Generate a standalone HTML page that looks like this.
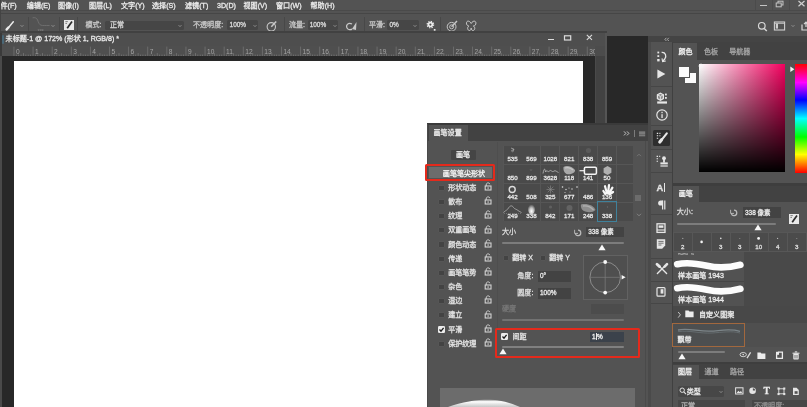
<!DOCTYPE html>
<html lang="zh"><head><meta charset="utf-8"><title>Photoshop</title>
<style>
html,body{margin:0;padding:0;}
body{width:807px;height:407px;overflow:hidden;background:#535353;position:relative;font-family:"Liberation Sans","Noto Sans CJK SC",sans-serif;}
#app{position:absolute;left:0;top:0;width:807px;height:407px;overflow:hidden;filter:blur(0.35px);will-change:transform;}
#app>div,#app>svg{position:absolute;display:block;}
.t{white-space:nowrap;-webkit-text-stroke:0.28px currentColor;}
</style></head><body>
<div id="app">
<div style="left:0px;top:0px;width:807px;height:14px;background:#535353;"></div>
<div class="t" style="left:0.5px;top:-0.1px;height:12px;line-height:12px;font-size:7.1px;color:#ececec;">件(F)</div>
<div class="t" style="left:26.8px;top:-0.1px;height:12px;line-height:12px;font-size:7.1px;color:#ececec;">编辑(E)</div>
<div class="t" style="left:58px;top:-0.1px;height:12px;line-height:12px;font-size:7.1px;color:#ececec;">图像(I)</div>
<div class="t" style="left:89px;top:-0.1px;height:12px;line-height:12px;font-size:7.1px;color:#ececec;">图层(L)</div>
<div class="t" style="left:121px;top:-0.1px;height:12px;line-height:12px;font-size:7.1px;color:#ececec;">文字(Y)</div>
<div class="t" style="left:152px;top:-0.1px;height:12px;line-height:12px;font-size:7.1px;color:#ececec;">选择(S)</div>
<div class="t" style="left:185px;top:-0.1px;height:12px;line-height:12px;font-size:7.1px;color:#ececec;">滤镜(T)</div>
<div class="t" style="left:217px;top:-0.1px;height:12px;line-height:12px;font-size:7.1px;color:#ececec;">3D(D)</div>
<div class="t" style="left:243.5px;top:-0.1px;height:12px;line-height:12px;font-size:7.1px;color:#ececec;">视图(V)</div>
<div class="t" style="left:276px;top:-0.1px;height:12px;line-height:12px;font-size:7.1px;color:#ececec;">窗口(W)</div>
<div class="t" style="left:310.5px;top:-0.1px;height:12px;line-height:12px;font-size:7.1px;color:#ececec;">帮助(H)</div>
<div style="left:755px;top:0px;width:1px;height:10px;background:#4b4b4b;"></div>
<div style="left:772px;top:0px;width:1px;height:10px;background:#4b4b4b;"></div>
<div style="left:789px;top:0px;width:1px;height:10px;background:#4b4b4b;"></div>
<div style="left:760px;top:4.6px;width:6.5px;height:1.4px;background:#c4c4c4;"></div>
<svg style="left:774px;top:0px;" width="11" height="9" viewBox="0 0 11 9"><rect x="4" y="1.2" width="5" height="3.8" fill="none" stroke="#c4c4c4" stroke-width="1"/><rect x="2.2" y="3" width="5" height="3.8" fill="#535353" stroke="#c4c4c4" stroke-width="1"/></svg>
<svg style="left:797px;top:0px;" width="9" height="8" viewBox="0 0 9 8"><path d="M1.5 1 L7.5 6.2 M7.5 1 L1.5 6.2" stroke="#d0d0d0" stroke-width="1.2"/></svg>
<div style="left:0px;top:9.6px;width:807px;height:1px;background:#4a4a4a;"></div>
<div style="left:0px;top:13.4px;width:807px;height:1px;background:#464646;"></div>
<div style="left:0px;top:14.4px;width:807px;height:21.6px;background:#535353;"></div>
<div style="left:0px;top:0px;width:1.2px;height:32px;background:#444444;"></div>
<svg style="left:4px;top:19.9px;" width="12" height="12" viewBox="0 0 12 12"><path d="M9.3 1.8 L5 7" stroke="#ececec" stroke-width="1.5" stroke-linecap="round"/><path d="M4.4 7.4 L2.6 9.6" stroke="#ececec" stroke-width="2.4" stroke-linecap="round"/></svg>
<svg style="left:17.5px;top:22.2px;" width="8" height="8" viewBox="0 0 8 8"><path d="M2.6 3.2 L4 4.6 L5.4 3.2" fill="none" stroke="#999999" stroke-width="0.9"/></svg>
<div style="left:27.5px;top:17px;width:1px;height:15px;background:#484848;"></div>
<svg style="left:30px;top:15.9px;" width="26" height="18" viewBox="0 0 26 18"><path d="M2.6 1.8 C5 1.4 6.6 1.8 7.6 4 C8.6 6.4 9 8.6 11 9.2 C13 9.8 15 9.4 19.6 9.5" fill="none" stroke="#707070" stroke-width="0.9"/><text x="7.4" y="15.6" font-size="3.6" fill="#8c8c8c" font-family="Liberation Sans, sans-serif">338</text></svg>
<svg style="left:48.8px;top:22.2px;" width="8" height="8" viewBox="0 0 8 8"><path d="M2.6 3.2 L4 4.6 L5.4 3.2" fill="none" stroke="#999999" stroke-width="0.9"/></svg>
<div style="left:58.5px;top:17px;width:1px;height:15px;background:#484848;"></div>
<svg style="left:63.6px;top:20.4px;" width="10" height="10" viewBox="0 0 10 10"><rect x="0" y="0" width="10" height="10" fill="#e8e8e8"/><path d="M8 1.6 L3.2 8.2" stroke="#2a2a2a" stroke-width="1.7"/><path d="M1.4 1.6 h2.4 M1.4 3.4 h1.6" stroke="#666" stroke-width="0.8"/></svg>
<div style="left:77.3px;top:17px;width:1px;height:15px;background:#484848;"></div>
<div class="t" style="left:85.5px;top:18.9px;height:12px;line-height:12px;font-size:7.05px;color:#c6c6c6;">模式:</div>
<div style="left:104.6px;top:20.5px;width:79px;height:9.1px;background:#464646;border-radius:1.5px;"></div>
<div class="t" style="left:110px;top:18.9px;height:12px;line-height:12px;font-size:7.05px;color:#d4d4d4;">正常</div>
<svg style="left:176px;top:22.2px;" width="8" height="8" viewBox="0 0 8 8"><path d="M2.6 3.2 L4 4.6 L5.4 3.2" fill="none" stroke="#999999" stroke-width="0.9"/></svg>
<div class="t" style="left:193px;top:18.9px;height:12px;line-height:12px;font-size:7.05px;color:#c6c6c6;">不透明度:</div>
<div style="left:227.4px;top:20.4px;width:31px;height:9.2px;background:#464646;border-radius:1.5px;"></div>
<div class="t" style="left:229.6px;top:18.9px;height:12px;line-height:12px;font-size:6.45px;color:#dcdcdc;">100%</div>
<svg style="left:251px;top:22.2px;" width="8" height="8" viewBox="0 0 8 8"><path d="M2.6 3.2 L4 4.6 L5.4 3.2" fill="none" stroke="#999999" stroke-width="0.9"/></svg>
<svg style="left:265px;top:18.9px;" width="14" height="14" viewBox="0 0 14 14"><circle cx="6.3" cy="7.8" r="4.2" fill="none" stroke="#c8c8c8" stroke-width="1.1"/><path d="M6.3 7.8 L11.2 2.4" stroke="#c8c8c8" stroke-width="1.5"/></svg>
<div style="left:283.5px;top:17px;width:1px;height:15px;background:#484848;"></div>
<div class="t" style="left:289px;top:18.9px;height:12px;line-height:12px;font-size:7.05px;color:#c6c6c6;">流量:</div>
<div style="left:308px;top:20.4px;width:29.6px;height:9.2px;background:#464646;border-radius:1.5px;"></div>
<div class="t" style="left:309.7px;top:18.9px;height:12px;line-height:12px;font-size:6.45px;color:#dcdcdc;">100%</div>
<svg style="left:330.6px;top:22.2px;" width="8" height="8" viewBox="0 0 8 8"><path d="M2.6 3.2 L4 4.6 L5.4 3.2" fill="none" stroke="#999999" stroke-width="0.9"/></svg>
<svg style="left:344px;top:18.9px;" width="16" height="14" viewBox="0 0 16 14"><path d="M8 5 C4.5 3 1.5 6 3 9 C4 11 7 11 8 10" fill="none" stroke="#c8c8c8" stroke-width="1.2"/><path d="M8 10 L12.5 3 L12 11 Z" fill="#c8c8c8"/></svg>
<div style="left:363.5px;top:17px;width:1px;height:15px;background:#484848;"></div>
<div class="t" style="left:369px;top:18.9px;height:12px;line-height:12px;font-size:7.05px;color:#c6c6c6;">平滑:</div>
<div style="left:387.4px;top:20.4px;width:31.4px;height:9.2px;background:#464646;border-radius:1.5px;"></div>
<div class="t" style="left:389.4px;top:18.9px;height:12px;line-height:12px;font-size:6.45px;color:#dcdcdc;">0%</div>
<svg style="left:411px;top:22.2px;" width="8" height="8" viewBox="0 0 8 8"><path d="M2.6 3.2 L4 4.6 L5.4 3.2" fill="none" stroke="#999999" stroke-width="0.9"/></svg>
<svg style="left:424px;top:18.9px;" width="14" height="14" viewBox="0 0 14 14"><circle cx="6.4" cy="5.6" r="1.9" fill="none" stroke="#ececec" stroke-width="1.7"/><circle cx="6.4" cy="5.6" r="3.2" fill="none" stroke="#ececec" stroke-width="1.3" stroke-dasharray="1.26 1.25"/><rect x="9.8" y="10" width="1.7" height="1.7" fill="#ececec"/></svg>
<div style="left:440px;top:17px;width:1px;height:14px;background:#484848;"></div>
<svg style="left:446px;top:18.9px;" width="14" height="14" viewBox="0 0 14 14"><circle cx="5.6" cy="7.8" r="4.4" fill="none" stroke="#c8c8c8" stroke-width="1"/><circle cx="5.6" cy="7.8" r="2" fill="none" stroke="#c8c8c8" stroke-width="0.9"/><path d="M5.6 7.8 L11 2" stroke="#c8c8c8" stroke-width="1.4"/></svg>
<svg style="left:464px;top:18.9px;" width="14" height="14" viewBox="0 0 14 14"><path d="M7.2 4.5 C5.5 1 1.8 1.5 2.6 5 C3 6.5 4 7 5 7 C3 8 3.2 11.5 5.6 11.5 C6.6 11.5 7.2 10 7.2 9 C7.2 10 7.8 11.5 8.8 11.5 C11.2 11.5 11.4 8 9.4 7 C10.4 7 11.4 6.5 11.8 5 C12.6 1.5 8.9 1 7.2 4.5 Z" fill="none" stroke="#c8c8c8" stroke-width="1"/></svg>
<svg style="left:757px;top:20.9px;" width="11" height="11" viewBox="0 0 11 11"><circle cx="4.8" cy="4.8" r="3.3" fill="none" stroke="#d8d8d8" stroke-width="1.2"/><path d="M7.2 7.4 L9.8 10" stroke="#d8d8d8" stroke-width="1.4"/></svg>
<svg style="left:773px;top:20.9px;" width="13" height="10" viewBox="0 0 13 10"><rect x="1.4" y="1" width="10.2" height="8" fill="none" stroke="#d0d0d0" stroke-width="1.1"/><rect x="2.8" y="2.6" width="2.2" height="5" fill="#d0d0d0"/><path d="M2 2.4 H11" stroke="#d0d0d0" stroke-width="0.8"/></svg>
<svg style="left:789px;top:22.2px;" width="8" height="8" viewBox="0 0 8 8"><path d="M2.6 3.2 L4 4.6 L5.4 3.2" fill="none" stroke="#999999" stroke-width="0.9"/></svg>
<svg style="left:800px;top:20.9px;" width="8" height="10" viewBox="0 0 8 10"><path d="M2 3.5 V9 H8" fill="none" stroke="#d8d8d8" stroke-width="1.2"/><path d="M6 6 V1.2 M4 3.2 L6 1.2 L8 3.2" fill="none" stroke="#d8d8d8" stroke-width="1.2"/></svg>
<div style="left:607px;top:36px;width:41.4px;height:87px;background:#282828;"></div>
<div style="left:0px;top:31.4px;width:607.3px;height:14.3px;background:#4e4e4e;"></div>
<div style="left:0px;top:31.4px;width:607.3px;height:1.4px;background:#414141;"></div>
<div style="left:0px;top:32.8px;width:1.5px;height:23.4px;background:#3a3a3a;"></div>
<div style="left:1.5px;top:35px;width:2.5px;height:8.5px;background:#4a6878;border-radius:1px;"></div>
<div class="t" style="left:5.6px;top:33.4px;height:12px;line-height:12px;font-size:7.08px;color:#ececec;">未标题-1 @ 172% (形状 1, RGB/8) *</div>
<div style="left:547.8px;top:38.6px;width:6.4px;height:1.3px;background:#dcdcdc;"></div>
<svg style="left:562px;top:33px;" width="11" height="9" viewBox="0 0 11 9"><rect x="2.5" y="2.8" width="6.2" height="4.2" fill="none" stroke="#dcdcdc" stroke-width="1.2"/></svg>
<svg style="left:585px;top:33px;" width="9" height="8" viewBox="0 0 9 8"><path d="M1.8 1.8 L7 6.8 M7 1.8 L1.8 6.8" stroke="#dcdcdc" stroke-width="1.1"/></svg>
<div style="left:1.5px;top:45.6px;width:593.5px;height:10.6px;background:#4f4f4f;"></div>
<svg style="left:0px;top:45.6px;" width="595" height="11" viewBox="0 0 595 11"><rect x="13.50" y="0.6" width="0.9" height="10" fill="#6e6e6e"/><rect x="15.89" y="8.6" width="0.8" height="2" fill="#767676"/><rect x="18.28" y="8.6" width="0.8" height="2" fill="#767676"/><rect x="20.67" y="8.6" width="0.8" height="2" fill="#767676"/><rect x="23.05" y="7.1" width="0.8" height="3.5" fill="#767676"/><rect x="25.44" y="8.6" width="0.8" height="2" fill="#767676"/><rect x="27.83" y="8.6" width="0.8" height="2" fill="#767676"/><rect x="30.22" y="8.6" width="0.8" height="2" fill="#767676"/><text x="15.90" y="7.6" font-size="6.6" fill="#a4a4a4" font-family="Liberation Sans, sans-serif">0</text><rect x="32.61" y="0.6" width="0.9" height="10" fill="#6e6e6e"/><rect x="35.00" y="8.6" width="0.8" height="2" fill="#767676"/><rect x="37.39" y="8.6" width="0.8" height="2" fill="#767676"/><rect x="39.78" y="8.6" width="0.8" height="2" fill="#767676"/><rect x="42.16" y="7.1" width="0.8" height="3.5" fill="#767676"/><rect x="44.55" y="8.6" width="0.8" height="2" fill="#767676"/><rect x="46.94" y="8.6" width="0.8" height="2" fill="#767676"/><rect x="49.33" y="8.6" width="0.8" height="2" fill="#767676"/><text x="35.01" y="7.6" font-size="6.6" fill="#a4a4a4" font-family="Liberation Sans, sans-serif">1</text><rect x="51.72" y="0.6" width="0.9" height="10" fill="#6e6e6e"/><rect x="54.11" y="8.6" width="0.8" height="2" fill="#767676"/><rect x="56.50" y="8.6" width="0.8" height="2" fill="#767676"/><rect x="58.89" y="8.6" width="0.8" height="2" fill="#767676"/><rect x="61.27" y="7.1" width="0.8" height="3.5" fill="#767676"/><rect x="63.66" y="8.6" width="0.8" height="2" fill="#767676"/><rect x="66.05" y="8.6" width="0.8" height="2" fill="#767676"/><rect x="68.44" y="8.6" width="0.8" height="2" fill="#767676"/><text x="54.12" y="7.6" font-size="6.6" fill="#a4a4a4" font-family="Liberation Sans, sans-serif">2</text><rect x="70.83" y="0.6" width="0.9" height="10" fill="#6e6e6e"/><rect x="73.22" y="8.6" width="0.8" height="2" fill="#767676"/><rect x="75.61" y="8.6" width="0.8" height="2" fill="#767676"/><rect x="78.00" y="8.6" width="0.8" height="2" fill="#767676"/><rect x="80.38" y="7.1" width="0.8" height="3.5" fill="#767676"/><rect x="82.77" y="8.6" width="0.8" height="2" fill="#767676"/><rect x="85.16" y="8.6" width="0.8" height="2" fill="#767676"/><rect x="87.55" y="8.6" width="0.8" height="2" fill="#767676"/><text x="73.23" y="7.6" font-size="6.6" fill="#a4a4a4" font-family="Liberation Sans, sans-serif">3</text><rect x="89.94" y="0.6" width="0.9" height="10" fill="#6e6e6e"/><rect x="92.33" y="8.6" width="0.8" height="2" fill="#767676"/><rect x="94.72" y="8.6" width="0.8" height="2" fill="#767676"/><rect x="97.11" y="8.6" width="0.8" height="2" fill="#767676"/><rect x="99.50" y="7.1" width="0.8" height="3.5" fill="#767676"/><rect x="101.88" y="8.6" width="0.8" height="2" fill="#767676"/><rect x="104.27" y="8.6" width="0.8" height="2" fill="#767676"/><rect x="106.66" y="8.6" width="0.8" height="2" fill="#767676"/><text x="92.34" y="7.6" font-size="6.6" fill="#a4a4a4" font-family="Liberation Sans, sans-serif">4</text><rect x="109.05" y="0.6" width="0.9" height="10" fill="#6e6e6e"/><rect x="111.44" y="8.6" width="0.8" height="2" fill="#767676"/><rect x="113.83" y="8.6" width="0.8" height="2" fill="#767676"/><rect x="116.22" y="8.6" width="0.8" height="2" fill="#767676"/><rect x="118.60" y="7.1" width="0.8" height="3.5" fill="#767676"/><rect x="120.99" y="8.6" width="0.8" height="2" fill="#767676"/><rect x="123.38" y="8.6" width="0.8" height="2" fill="#767676"/><rect x="125.77" y="8.6" width="0.8" height="2" fill="#767676"/><text x="111.45" y="7.6" font-size="6.6" fill="#a4a4a4" font-family="Liberation Sans, sans-serif">5</text><rect x="128.16" y="0.6" width="0.9" height="10" fill="#6e6e6e"/><rect x="130.55" y="8.6" width="0.8" height="2" fill="#767676"/><rect x="132.94" y="8.6" width="0.8" height="2" fill="#767676"/><rect x="135.33" y="8.6" width="0.8" height="2" fill="#767676"/><rect x="137.72" y="7.1" width="0.8" height="3.5" fill="#767676"/><rect x="140.10" y="8.6" width="0.8" height="2" fill="#767676"/><rect x="142.49" y="8.6" width="0.8" height="2" fill="#767676"/><rect x="144.88" y="8.6" width="0.8" height="2" fill="#767676"/><text x="130.56" y="7.6" font-size="6.6" fill="#a4a4a4" font-family="Liberation Sans, sans-serif">6</text><rect x="147.27" y="0.6" width="0.9" height="10" fill="#6e6e6e"/><rect x="149.66" y="8.6" width="0.8" height="2" fill="#767676"/><rect x="152.05" y="8.6" width="0.8" height="2" fill="#767676"/><rect x="154.44" y="8.6" width="0.8" height="2" fill="#767676"/><rect x="156.82" y="7.1" width="0.8" height="3.5" fill="#767676"/><rect x="159.21" y="8.6" width="0.8" height="2" fill="#767676"/><rect x="161.60" y="8.6" width="0.8" height="2" fill="#767676"/><rect x="163.99" y="8.6" width="0.8" height="2" fill="#767676"/><text x="149.67" y="7.6" font-size="6.6" fill="#a4a4a4" font-family="Liberation Sans, sans-serif">7</text><rect x="166.38" y="0.6" width="0.9" height="10" fill="#6e6e6e"/><rect x="168.77" y="8.6" width="0.8" height="2" fill="#767676"/><rect x="171.16" y="8.6" width="0.8" height="2" fill="#767676"/><rect x="173.55" y="8.6" width="0.8" height="2" fill="#767676"/><rect x="175.94" y="7.1" width="0.8" height="3.5" fill="#767676"/><rect x="178.32" y="8.6" width="0.8" height="2" fill="#767676"/><rect x="180.71" y="8.6" width="0.8" height="2" fill="#767676"/><rect x="183.10" y="8.6" width="0.8" height="2" fill="#767676"/><text x="168.78" y="7.6" font-size="6.6" fill="#a4a4a4" font-family="Liberation Sans, sans-serif">8</text><rect x="185.49" y="0.6" width="0.9" height="10" fill="#6e6e6e"/><rect x="187.88" y="8.6" width="0.8" height="2" fill="#767676"/><rect x="190.27" y="8.6" width="0.8" height="2" fill="#767676"/><rect x="192.66" y="8.6" width="0.8" height="2" fill="#767676"/><rect x="195.05" y="7.1" width="0.8" height="3.5" fill="#767676"/><rect x="197.43" y="8.6" width="0.8" height="2" fill="#767676"/><rect x="199.82" y="8.6" width="0.8" height="2" fill="#767676"/><rect x="202.21" y="8.6" width="0.8" height="2" fill="#767676"/><text x="187.89" y="7.6" font-size="6.6" fill="#a4a4a4" font-family="Liberation Sans, sans-serif">9</text><rect x="204.60" y="0.6" width="0.9" height="10" fill="#6e6e6e"/><rect x="206.99" y="8.6" width="0.8" height="2" fill="#767676"/><rect x="209.38" y="8.6" width="0.8" height="2" fill="#767676"/><rect x="211.77" y="8.6" width="0.8" height="2" fill="#767676"/><rect x="214.16" y="7.1" width="0.8" height="3.5" fill="#767676"/><rect x="216.54" y="8.6" width="0.8" height="2" fill="#767676"/><rect x="218.93" y="8.6" width="0.8" height="2" fill="#767676"/><rect x="221.32" y="8.6" width="0.8" height="2" fill="#767676"/><text x="207.00" y="7.6" font-size="6.6" fill="#a4a4a4" font-family="Liberation Sans, sans-serif">10</text><rect x="223.71" y="0.6" width="0.9" height="10" fill="#6e6e6e"/><rect x="226.10" y="8.6" width="0.8" height="2" fill="#767676"/><rect x="228.49" y="8.6" width="0.8" height="2" fill="#767676"/><rect x="230.88" y="8.6" width="0.8" height="2" fill="#767676"/><rect x="233.26" y="7.1" width="0.8" height="3.5" fill="#767676"/><rect x="235.65" y="8.6" width="0.8" height="2" fill="#767676"/><rect x="238.04" y="8.6" width="0.8" height="2" fill="#767676"/><rect x="240.43" y="8.6" width="0.8" height="2" fill="#767676"/><text x="226.11" y="7.6" font-size="6.6" fill="#a4a4a4" font-family="Liberation Sans, sans-serif">11</text><rect x="242.82" y="0.6" width="0.9" height="10" fill="#6e6e6e"/><rect x="245.21" y="8.6" width="0.8" height="2" fill="#767676"/><rect x="247.60" y="8.6" width="0.8" height="2" fill="#767676"/><rect x="249.99" y="8.6" width="0.8" height="2" fill="#767676"/><rect x="252.38" y="7.1" width="0.8" height="3.5" fill="#767676"/><rect x="254.76" y="8.6" width="0.8" height="2" fill="#767676"/><rect x="257.15" y="8.6" width="0.8" height="2" fill="#767676"/><rect x="259.54" y="8.6" width="0.8" height="2" fill="#767676"/><text x="245.22" y="7.6" font-size="6.6" fill="#a4a4a4" font-family="Liberation Sans, sans-serif">12</text><rect x="261.93" y="0.6" width="0.9" height="10" fill="#6e6e6e"/><rect x="264.32" y="8.6" width="0.8" height="2" fill="#767676"/><rect x="266.71" y="8.6" width="0.8" height="2" fill="#767676"/><rect x="269.10" y="8.6" width="0.8" height="2" fill="#767676"/><rect x="271.49" y="7.1" width="0.8" height="3.5" fill="#767676"/><rect x="273.87" y="8.6" width="0.8" height="2" fill="#767676"/><rect x="276.26" y="8.6" width="0.8" height="2" fill="#767676"/><rect x="278.65" y="8.6" width="0.8" height="2" fill="#767676"/><text x="264.33" y="7.6" font-size="6.6" fill="#a4a4a4" font-family="Liberation Sans, sans-serif">13</text><rect x="281.04" y="0.6" width="0.9" height="10" fill="#6e6e6e"/><rect x="283.43" y="8.6" width="0.8" height="2" fill="#767676"/><rect x="285.82" y="8.6" width="0.8" height="2" fill="#767676"/><rect x="288.21" y="8.6" width="0.8" height="2" fill="#767676"/><rect x="290.59" y="7.1" width="0.8" height="3.5" fill="#767676"/><rect x="292.98" y="8.6" width="0.8" height="2" fill="#767676"/><rect x="295.37" y="8.6" width="0.8" height="2" fill="#767676"/><rect x="297.76" y="8.6" width="0.8" height="2" fill="#767676"/><text x="283.44" y="7.6" font-size="6.6" fill="#a4a4a4" font-family="Liberation Sans, sans-serif">14</text><rect x="300.15" y="0.6" width="0.9" height="10" fill="#6e6e6e"/><rect x="302.54" y="8.6" width="0.8" height="2" fill="#767676"/><rect x="304.93" y="8.6" width="0.8" height="2" fill="#767676"/><rect x="307.32" y="8.6" width="0.8" height="2" fill="#767676"/><rect x="309.70" y="7.1" width="0.8" height="3.5" fill="#767676"/><rect x="312.09" y="8.6" width="0.8" height="2" fill="#767676"/><rect x="314.48" y="8.6" width="0.8" height="2" fill="#767676"/><rect x="316.87" y="8.6" width="0.8" height="2" fill="#767676"/><text x="302.55" y="7.6" font-size="6.6" fill="#a4a4a4" font-family="Liberation Sans, sans-serif">15</text><rect x="319.26" y="0.6" width="0.9" height="10" fill="#6e6e6e"/><rect x="321.65" y="8.6" width="0.8" height="2" fill="#767676"/><rect x="324.04" y="8.6" width="0.8" height="2" fill="#767676"/><rect x="326.43" y="8.6" width="0.8" height="2" fill="#767676"/><rect x="328.81" y="7.1" width="0.8" height="3.5" fill="#767676"/><rect x="331.20" y="8.6" width="0.8" height="2" fill="#767676"/><rect x="333.59" y="8.6" width="0.8" height="2" fill="#767676"/><rect x="335.98" y="8.6" width="0.8" height="2" fill="#767676"/><text x="321.66" y="7.6" font-size="6.6" fill="#a4a4a4" font-family="Liberation Sans, sans-serif">16</text><rect x="338.37" y="0.6" width="0.9" height="10" fill="#6e6e6e"/><rect x="340.76" y="8.6" width="0.8" height="2" fill="#767676"/><rect x="343.15" y="8.6" width="0.8" height="2" fill="#767676"/><rect x="345.54" y="8.6" width="0.8" height="2" fill="#767676"/><rect x="347.93" y="7.1" width="0.8" height="3.5" fill="#767676"/><rect x="350.31" y="8.6" width="0.8" height="2" fill="#767676"/><rect x="352.70" y="8.6" width="0.8" height="2" fill="#767676"/><rect x="355.09" y="8.6" width="0.8" height="2" fill="#767676"/><text x="340.77" y="7.6" font-size="6.6" fill="#a4a4a4" font-family="Liberation Sans, sans-serif">17</text><rect x="357.48" y="0.6" width="0.9" height="10" fill="#6e6e6e"/><rect x="359.87" y="8.6" width="0.8" height="2" fill="#767676"/><rect x="362.26" y="8.6" width="0.8" height="2" fill="#767676"/><rect x="364.65" y="8.6" width="0.8" height="2" fill="#767676"/><rect x="367.04" y="7.1" width="0.8" height="3.5" fill="#767676"/><rect x="369.42" y="8.6" width="0.8" height="2" fill="#767676"/><rect x="371.81" y="8.6" width="0.8" height="2" fill="#767676"/><rect x="374.20" y="8.6" width="0.8" height="2" fill="#767676"/><text x="359.88" y="7.6" font-size="6.6" fill="#a4a4a4" font-family="Liberation Sans, sans-serif">18</text><rect x="376.59" y="0.6" width="0.9" height="10" fill="#6e6e6e"/><rect x="378.98" y="8.6" width="0.8" height="2" fill="#767676"/><rect x="381.37" y="8.6" width="0.8" height="2" fill="#767676"/><rect x="383.76" y="8.6" width="0.8" height="2" fill="#767676"/><rect x="386.14" y="7.1" width="0.8" height="3.5" fill="#767676"/><rect x="388.53" y="8.6" width="0.8" height="2" fill="#767676"/><rect x="390.92" y="8.6" width="0.8" height="2" fill="#767676"/><rect x="393.31" y="8.6" width="0.8" height="2" fill="#767676"/><text x="378.99" y="7.6" font-size="6.6" fill="#a4a4a4" font-family="Liberation Sans, sans-serif">19</text><rect x="395.70" y="0.6" width="0.9" height="10" fill="#6e6e6e"/><rect x="398.09" y="8.6" width="0.8" height="2" fill="#767676"/><rect x="400.48" y="8.6" width="0.8" height="2" fill="#767676"/><rect x="402.87" y="8.6" width="0.8" height="2" fill="#767676"/><rect x="405.25" y="7.1" width="0.8" height="3.5" fill="#767676"/><rect x="407.64" y="8.6" width="0.8" height="2" fill="#767676"/><rect x="410.03" y="8.6" width="0.8" height="2" fill="#767676"/><rect x="412.42" y="8.6" width="0.8" height="2" fill="#767676"/><text x="398.10" y="7.6" font-size="6.6" fill="#a4a4a4" font-family="Liberation Sans, sans-serif">20</text><rect x="414.81" y="0.6" width="0.9" height="10" fill="#6e6e6e"/><rect x="417.20" y="8.6" width="0.8" height="2" fill="#767676"/><rect x="419.59" y="8.6" width="0.8" height="2" fill="#767676"/><rect x="421.98" y="8.6" width="0.8" height="2" fill="#767676"/><rect x="424.37" y="7.1" width="0.8" height="3.5" fill="#767676"/><rect x="426.75" y="8.6" width="0.8" height="2" fill="#767676"/><rect x="429.14" y="8.6" width="0.8" height="2" fill="#767676"/><rect x="431.53" y="8.6" width="0.8" height="2" fill="#767676"/><text x="417.21" y="7.6" font-size="6.6" fill="#a4a4a4" font-family="Liberation Sans, sans-serif">21</text><rect x="433.92" y="0.6" width="0.9" height="10" fill="#6e6e6e"/><rect x="436.31" y="8.6" width="0.8" height="2" fill="#767676"/><rect x="438.70" y="8.6" width="0.8" height="2" fill="#767676"/><rect x="441.09" y="8.6" width="0.8" height="2" fill="#767676"/><rect x="443.47" y="7.1" width="0.8" height="3.5" fill="#767676"/><rect x="445.86" y="8.6" width="0.8" height="2" fill="#767676"/><rect x="448.25" y="8.6" width="0.8" height="2" fill="#767676"/><rect x="450.64" y="8.6" width="0.8" height="2" fill="#767676"/><text x="436.32" y="7.6" font-size="6.6" fill="#a4a4a4" font-family="Liberation Sans, sans-serif">22</text><rect x="453.03" y="0.6" width="0.9" height="10" fill="#6e6e6e"/><rect x="455.42" y="8.6" width="0.8" height="2" fill="#767676"/><rect x="457.81" y="8.6" width="0.8" height="2" fill="#767676"/><rect x="460.20" y="8.6" width="0.8" height="2" fill="#767676"/><rect x="462.58" y="7.1" width="0.8" height="3.5" fill="#767676"/><rect x="464.97" y="8.6" width="0.8" height="2" fill="#767676"/><rect x="467.36" y="8.6" width="0.8" height="2" fill="#767676"/><rect x="469.75" y="8.6" width="0.8" height="2" fill="#767676"/><text x="455.43" y="7.6" font-size="6.6" fill="#a4a4a4" font-family="Liberation Sans, sans-serif">23</text><rect x="472.14" y="0.6" width="0.9" height="10" fill="#6e6e6e"/><rect x="474.53" y="8.6" width="0.8" height="2" fill="#767676"/><rect x="476.92" y="8.6" width="0.8" height="2" fill="#767676"/><rect x="479.31" y="8.6" width="0.8" height="2" fill="#767676"/><rect x="481.69" y="7.1" width="0.8" height="3.5" fill="#767676"/><rect x="484.08" y="8.6" width="0.8" height="2" fill="#767676"/><rect x="486.47" y="8.6" width="0.8" height="2" fill="#767676"/><rect x="488.86" y="8.6" width="0.8" height="2" fill="#767676"/><text x="474.54" y="7.6" font-size="6.6" fill="#a4a4a4" font-family="Liberation Sans, sans-serif">24</text><rect x="491.25" y="0.6" width="0.9" height="10" fill="#6e6e6e"/><rect x="493.64" y="8.6" width="0.8" height="2" fill="#767676"/><rect x="496.03" y="8.6" width="0.8" height="2" fill="#767676"/><rect x="498.42" y="8.6" width="0.8" height="2" fill="#767676"/><rect x="500.81" y="7.1" width="0.8" height="3.5" fill="#767676"/><rect x="503.19" y="8.6" width="0.8" height="2" fill="#767676"/><rect x="505.58" y="8.6" width="0.8" height="2" fill="#767676"/><rect x="507.97" y="8.6" width="0.8" height="2" fill="#767676"/><text x="493.65" y="7.6" font-size="6.6" fill="#a4a4a4" font-family="Liberation Sans, sans-serif">25</text><rect x="510.36" y="0.6" width="0.9" height="10" fill="#6e6e6e"/><rect x="512.75" y="8.6" width="0.8" height="2" fill="#767676"/><rect x="515.14" y="8.6" width="0.8" height="2" fill="#767676"/><rect x="517.53" y="8.6" width="0.8" height="2" fill="#767676"/><rect x="519.91" y="7.1" width="0.8" height="3.5" fill="#767676"/><rect x="522.30" y="8.6" width="0.8" height="2" fill="#767676"/><rect x="524.69" y="8.6" width="0.8" height="2" fill="#767676"/><rect x="527.08" y="8.6" width="0.8" height="2" fill="#767676"/><text x="512.76" y="7.6" font-size="6.6" fill="#a4a4a4" font-family="Liberation Sans, sans-serif">26</text><rect x="529.47" y="0.6" width="0.9" height="10" fill="#6e6e6e"/><rect x="531.86" y="8.6" width="0.8" height="2" fill="#767676"/><rect x="534.25" y="8.6" width="0.8" height="2" fill="#767676"/><rect x="536.64" y="8.6" width="0.8" height="2" fill="#767676"/><rect x="539.02" y="7.1" width="0.8" height="3.5" fill="#767676"/><rect x="541.41" y="8.6" width="0.8" height="2" fill="#767676"/><rect x="543.80" y="8.6" width="0.8" height="2" fill="#767676"/><rect x="546.19" y="8.6" width="0.8" height="2" fill="#767676"/><text x="531.87" y="7.6" font-size="6.6" fill="#a4a4a4" font-family="Liberation Sans, sans-serif">27</text><rect x="548.58" y="0.6" width="0.9" height="10" fill="#6e6e6e"/><rect x="550.97" y="8.6" width="0.8" height="2" fill="#767676"/><rect x="553.36" y="8.6" width="0.8" height="2" fill="#767676"/><rect x="555.75" y="8.6" width="0.8" height="2" fill="#767676"/><rect x="558.13" y="7.1" width="0.8" height="3.5" fill="#767676"/><rect x="560.52" y="8.6" width="0.8" height="2" fill="#767676"/><rect x="562.91" y="8.6" width="0.8" height="2" fill="#767676"/><rect x="565.30" y="8.6" width="0.8" height="2" fill="#767676"/><text x="550.98" y="7.6" font-size="6.6" fill="#a4a4a4" font-family="Liberation Sans, sans-serif">28</text><rect x="567.69" y="0.6" width="0.9" height="10" fill="#6e6e6e"/><rect x="570.08" y="8.6" width="0.8" height="2" fill="#767676"/><rect x="572.47" y="8.6" width="0.8" height="2" fill="#767676"/><rect x="574.86" y="8.6" width="0.8" height="2" fill="#767676"/><rect x="577.24" y="7.1" width="0.8" height="3.5" fill="#767676"/><rect x="579.63" y="8.6" width="0.8" height="2" fill="#767676"/><rect x="582.02" y="8.6" width="0.8" height="2" fill="#767676"/><rect x="584.41" y="8.6" width="0.8" height="2" fill="#767676"/><text x="570.09" y="7.6" font-size="6.6" fill="#a4a4a4" font-family="Liberation Sans, sans-serif">29</text><rect x="586.80" y="0.6" width="0.9" height="10" fill="#6e6e6e"/><rect x="589.19" y="8.6" width="0.8" height="2" fill="#767676"/><rect x="591.58" y="8.6" width="0.8" height="2" fill="#767676"/><rect x="593.97" y="8.6" width="0.8" height="2" fill="#767676"/><text x="589.20" y="7.6" font-size="6.6" fill="#a4a4a4" font-family="Liberation Sans, sans-serif">30</text></svg>
<div style="left:0px;top:56.2px;width:595px;height:351px;background:#282828;"></div>
<div style="left:0px;top:56.2px;width:2.2px;height:351px;background:#4a4a4a;"></div>
<div style="left:13.8px;top:61.1px;width:569px;height:346px;background:#ffffff;"></div>
<div style="left:595px;top:45.6px;width:12.3px;height:10.6px;background:#4c4c4c;"></div>
<div style="left:594.6px;top:56.2px;width:12.7px;height:351px;background:#424242;"></div>
<div style="left:594.6px;top:56.2px;width:0.9px;height:351px;background:#4a4a4a;"></div>
<div style="left:605.4px;top:32.8px;width:1.9px;height:375px;background:#555555;"></div>
<div style="left:427.2px;top:122.8px;width:221.2px;height:285px;background:#535353;"></div>
<div style="left:427.2px;top:122.8px;width:221.2px;height:1.8px;background:#3a3a3a;"></div>
<div style="left:427.2px;top:124.6px;width:221.2px;height:16px;background:#424242;"></div>
<div style="left:429px;top:125.4px;width:38.5px;height:15.4px;background:#535353;"></div>
<div class="t" style="left:433.5px;top:127.4px;height:12px;line-height:12px;font-size:7.05px;color:#ececec;">画笔设置</div>
<svg style="left:623px;top:130.4px;" width="8" height="7" viewBox="0 0 8 7"><path d="M1 1.4 L2.9 3.4 L1 5.4 M4 1.4 L5.9 3.4 L4 5.4" fill="none" stroke="#d4d4d4" stroke-width="0.9"/></svg>
<div style="left:633.8px;top:129.6px;width:0.9px;height:7px;background:#7c7c7c;"></div>
<svg style="left:638.7px;top:130.6px;" width="7" height="7" viewBox="0 0 7 7"><path d="M0 1.1 H6.2 M0 2.9 H6.2 M0 4.7 H6.2" stroke="#8e8e8e" stroke-width="1.1"/></svg>
<div style="left:427.2px;top:124.4px;width:0.8px;height:283px;background:#4a4a4a;"></div>
<div style="left:644.5px;top:141px;width:1px;height:266px;background:#4a4a4a;"></div>
<div style="left:450.6px;top:149.8px;width:25.4px;height:10.4px;background:#454545;border-radius:1px;"></div>
<div class="t" style="left:443.0px;top:149.2px;width:40px;text-align:center;height:12px;line-height:12px;font-size:7.05px;color:#ececec;">画笔</div>
<div style="left:428.6px;top:166.8px;width:63px;height:11.2px;background:#6c6c6c;"></div>
<div class="t" style="left:434.0px;top:168.1px;width:60px;text-align:center;height:12px;line-height:12px;font-size:7.05px;color:#f4f4f4;">画笔笔尖形状</div>
<div style="left:425.2px;top:164.3px;width:69.6px;height:16.4px;border:2.2px solid #e42a1c;border-radius:1.5px;box-sizing:border-box;"></div>
<div style="left:438.4px;top:184.7px;width:6.2px;height:6.2px;background:#434343;border:0.8px solid #565656;box-sizing:border-box;border-radius:1px;"></div>
<div class="t" style="left:448.2px;top:181.9px;height:12px;line-height:12px;font-size:7.05px;color:#e4e4e4;">形状动态</div>
<svg style="left:483.8px;top:182.0px;" width="8" height="9" viewBox="0 0 8 9"><path d="M2.2 4 V2.8 C2.2 0.4 5.6 0.4 5.8 2.2" fill="none" stroke="#d4d4d4" stroke-width="1"/><rect x="1.2" y="4" width="5.8" height="4" fill="none" stroke="#d4d4d4" stroke-width="1.1"/><rect x="3.6" y="5.2" width="1" height="1.7" fill="#d4d4d4"/></svg>
<div style="left:438.4px;top:198.87px;width:6.2px;height:6.2px;background:#434343;border:0.8px solid #565656;box-sizing:border-box;border-radius:1px;"></div>
<div class="t" style="left:448.2px;top:196.07px;height:12px;line-height:12px;font-size:7.05px;color:#e4e4e4;">散布</div>
<svg style="left:483.8px;top:196.17px;" width="8" height="9" viewBox="0 0 8 9"><path d="M2.2 4 V2.8 C2.2 0.4 5.6 0.4 5.8 2.2" fill="none" stroke="#d4d4d4" stroke-width="1"/><rect x="1.2" y="4" width="5.8" height="4" fill="none" stroke="#d4d4d4" stroke-width="1.1"/><rect x="3.6" y="5.2" width="1" height="1.7" fill="#d4d4d4"/></svg>
<div style="left:438.4px;top:213.04px;width:6.2px;height:6.2px;background:#434343;border:0.8px solid #565656;box-sizing:border-box;border-radius:1px;"></div>
<div class="t" style="left:448.2px;top:210.24px;height:12px;line-height:12px;font-size:7.05px;color:#e4e4e4;">纹理</div>
<svg style="left:483.8px;top:210.34px;" width="8" height="9" viewBox="0 0 8 9"><path d="M2.2 4 V2.8 C2.2 0.4 5.6 0.4 5.8 2.2" fill="none" stroke="#d4d4d4" stroke-width="1"/><rect x="1.2" y="4" width="5.8" height="4" fill="none" stroke="#d4d4d4" stroke-width="1.1"/><rect x="3.6" y="5.2" width="1" height="1.7" fill="#d4d4d4"/></svg>
<div style="left:438.4px;top:227.21px;width:6.2px;height:6.2px;background:#434343;border:0.8px solid #565656;box-sizing:border-box;border-radius:1px;"></div>
<div class="t" style="left:448.2px;top:224.41px;height:12px;line-height:12px;font-size:7.05px;color:#e4e4e4;">双重画笔</div>
<svg style="left:483.8px;top:224.51px;" width="8" height="9" viewBox="0 0 8 9"><path d="M2.2 4 V2.8 C2.2 0.4 5.6 0.4 5.8 2.2" fill="none" stroke="#d4d4d4" stroke-width="1"/><rect x="1.2" y="4" width="5.8" height="4" fill="none" stroke="#d4d4d4" stroke-width="1.1"/><rect x="3.6" y="5.2" width="1" height="1.7" fill="#d4d4d4"/></svg>
<div style="left:438.4px;top:241.38px;width:6.2px;height:6.2px;background:#434343;border:0.8px solid #565656;box-sizing:border-box;border-radius:1px;"></div>
<div class="t" style="left:448.2px;top:238.58px;height:12px;line-height:12px;font-size:7.05px;color:#e4e4e4;">颜色动态</div>
<svg style="left:483.8px;top:238.68px;" width="8" height="9" viewBox="0 0 8 9"><path d="M2.2 4 V2.8 C2.2 0.4 5.6 0.4 5.8 2.2" fill="none" stroke="#d4d4d4" stroke-width="1"/><rect x="1.2" y="4" width="5.8" height="4" fill="none" stroke="#d4d4d4" stroke-width="1.1"/><rect x="3.6" y="5.2" width="1" height="1.7" fill="#d4d4d4"/></svg>
<div style="left:438.4px;top:255.55px;width:6.2px;height:6.2px;background:#434343;border:0.8px solid #565656;box-sizing:border-box;border-radius:1px;"></div>
<div class="t" style="left:448.2px;top:252.75px;height:12px;line-height:12px;font-size:7.05px;color:#e4e4e4;">传递</div>
<svg style="left:483.8px;top:252.85px;" width="8" height="9" viewBox="0 0 8 9"><path d="M2.2 4 V2.8 C2.2 0.4 5.6 0.4 5.8 2.2" fill="none" stroke="#d4d4d4" stroke-width="1"/><rect x="1.2" y="4" width="5.8" height="4" fill="none" stroke="#d4d4d4" stroke-width="1.1"/><rect x="3.6" y="5.2" width="1" height="1.7" fill="#d4d4d4"/></svg>
<div style="left:438.4px;top:269.72px;width:6.2px;height:6.2px;background:#434343;border:0.8px solid #565656;box-sizing:border-box;border-radius:1px;"></div>
<div class="t" style="left:448.2px;top:266.92px;height:12px;line-height:12px;font-size:7.05px;color:#e4e4e4;">画笔笔势</div>
<svg style="left:483.8px;top:267.02px;" width="8" height="9" viewBox="0 0 8 9"><path d="M2.2 4 V2.8 C2.2 0.4 5.6 0.4 5.8 2.2" fill="none" stroke="#d4d4d4" stroke-width="1"/><rect x="1.2" y="4" width="5.8" height="4" fill="none" stroke="#d4d4d4" stroke-width="1.1"/><rect x="3.6" y="5.2" width="1" height="1.7" fill="#d4d4d4"/></svg>
<div style="left:438.4px;top:283.89px;width:6.2px;height:6.2px;background:#434343;border:0.8px solid #565656;box-sizing:border-box;border-radius:1px;"></div>
<div class="t" style="left:448.2px;top:281.09px;height:12px;line-height:12px;font-size:7.05px;color:#e4e4e4;">杂色</div>
<svg style="left:483.8px;top:281.19px;" width="8" height="9" viewBox="0 0 8 9"><path d="M2.2 4 V2.8 C2.2 0.4 5.6 0.4 5.8 2.2" fill="none" stroke="#d4d4d4" stroke-width="1"/><rect x="1.2" y="4" width="5.8" height="4" fill="none" stroke="#d4d4d4" stroke-width="1.1"/><rect x="3.6" y="5.2" width="1" height="1.7" fill="#d4d4d4"/></svg>
<div style="left:438.4px;top:298.06px;width:6.2px;height:6.2px;background:#434343;border:0.8px solid #565656;box-sizing:border-box;border-radius:1px;"></div>
<div class="t" style="left:448.2px;top:295.26px;height:12px;line-height:12px;font-size:7.05px;color:#e4e4e4;">湿边</div>
<svg style="left:483.8px;top:295.36px;" width="8" height="9" viewBox="0 0 8 9"><path d="M2.2 4 V2.8 C2.2 0.4 5.6 0.4 5.8 2.2" fill="none" stroke="#d4d4d4" stroke-width="1"/><rect x="1.2" y="4" width="5.8" height="4" fill="none" stroke="#d4d4d4" stroke-width="1.1"/><rect x="3.6" y="5.2" width="1" height="1.7" fill="#d4d4d4"/></svg>
<div style="left:438.4px;top:312.23px;width:6.2px;height:6.2px;background:#434343;border:0.8px solid #565656;box-sizing:border-box;border-radius:1px;"></div>
<div class="t" style="left:448.2px;top:309.43px;height:12px;line-height:12px;font-size:7.05px;color:#e4e4e4;">建立</div>
<svg style="left:483.8px;top:309.53px;" width="8" height="9" viewBox="0 0 8 9"><path d="M2.2 4 V2.8 C2.2 0.4 5.6 0.4 5.8 2.2" fill="none" stroke="#d4d4d4" stroke-width="1"/><rect x="1.2" y="4" width="5.8" height="4" fill="none" stroke="#d4d4d4" stroke-width="1.1"/><rect x="3.6" y="5.2" width="1" height="1.7" fill="#d4d4d4"/></svg>
<div style="left:438.09999999999997px;top:326.09999999999997px;width:7px;height:7px;background:#ececec;border-radius:1.3px;"></div>
<svg style="left:438.09999999999997px;top:326.09999999999997px;" width="7" height="7" viewBox="0 0 7 7"><path d="M1.5 3.5 L3 5.2 L5.6 1.8" fill="none" stroke="#1c1c1c" stroke-width="1.3"/></svg>
<div class="t" style="left:448.2px;top:323.6px;height:12px;line-height:12px;font-size:7.05px;color:#e4e4e4;">平滑</div>
<svg style="left:483.8px;top:323.7px;" width="8" height="9" viewBox="0 0 8 9"><path d="M2.2 4 V2.8 C2.2 0.4 5.6 0.4 5.8 2.2" fill="none" stroke="#d4d4d4" stroke-width="1"/><rect x="1.2" y="4" width="5.8" height="4" fill="none" stroke="#d4d4d4" stroke-width="1.1"/><rect x="3.6" y="5.2" width="1" height="1.7" fill="#d4d4d4"/></svg>
<div style="left:438.4px;top:340.57px;width:6.2px;height:6.2px;background:#434343;border:0.8px solid #565656;box-sizing:border-box;border-radius:1px;"></div>
<div class="t" style="left:448.2px;top:337.77px;height:12px;line-height:12px;font-size:7.05px;color:#e4e4e4;">保护纹理</div>
<svg style="left:483.8px;top:337.87px;" width="8" height="9" viewBox="0 0 8 9"><path d="M2.2 4 V2.8 C2.2 0.4 5.6 0.4 5.8 2.2" fill="none" stroke="#d4d4d4" stroke-width="1"/><rect x="1.2" y="4" width="5.8" height="4" fill="none" stroke="#d4d4d4" stroke-width="1.1"/><rect x="3.6" y="5.2" width="1" height="1.7" fill="#d4d4d4"/></svg>
<div style="left:496.6px;top:142px;width:1px;height:186px;background:#4e4e4e;"></div>
<div style="left:502.7px;top:146.4px;width:130.5px;height:75.08px;background:#565656;"></div>
<div style="left:503.5px;top:146.4px;width:18.1px;height:17.52px;background:#4a4a4a;"></div>
<div class="t" style="left:500.55px;top:154.9px;width:24px;text-align:center;height:8px;line-height:8px;font-size:6.2px;color:#e8e8e8;font-family:'Liberation Sans',sans-serif;">535</div>
<div style="left:522.4px;top:146.4px;width:18.1px;height:17.52px;background:#4a4a4a;"></div>
<div class="t" style="left:519.45px;top:154.9px;width:24px;text-align:center;height:8px;line-height:8px;font-size:6.2px;color:#e8e8e8;font-family:'Liberation Sans',sans-serif;">569</div>
<div style="left:541.3px;top:146.4px;width:18.1px;height:17.52px;background:#4a4a4a;"></div>
<div class="t" style="left:538.35px;top:154.9px;width:24px;text-align:center;height:8px;line-height:8px;font-size:6.2px;color:#e8e8e8;font-family:'Liberation Sans',sans-serif;">1028</div>
<div style="left:560.2px;top:146.4px;width:18.1px;height:17.52px;background:#4a4a4a;"></div>
<div class="t" style="left:557.25px;top:154.9px;width:24px;text-align:center;height:8px;line-height:8px;font-size:6.2px;color:#e8e8e8;font-family:'Liberation Sans',sans-serif;">821</div>
<div style="left:579.1px;top:146.4px;width:18.1px;height:17.52px;background:#4a4a4a;"></div>
<div class="t" style="left:576.15px;top:154.9px;width:24px;text-align:center;height:8px;line-height:8px;font-size:6.2px;color:#e8e8e8;font-family:'Liberation Sans',sans-serif;">838</div>
<div style="left:598.0px;top:146.4px;width:18.1px;height:17.52px;background:#4a4a4a;"></div>
<div class="t" style="left:595.05px;top:154.9px;width:24px;text-align:center;height:8px;line-height:8px;font-size:6.2px;color:#e8e8e8;font-family:'Liberation Sans',sans-serif;">859</div>
<div style="left:616.9px;top:146.4px;width:15.7px;height:17.52px;background:#4a4a4a;"></div>
<div style="left:503.5px;top:164.72px;width:18.1px;height:18.12px;background:#4a4a4a;"></div>
<div class="t" style="left:500.55px;top:173.82px;width:24px;text-align:center;height:8px;line-height:8px;font-size:6.2px;color:#e8e8e8;font-family:'Liberation Sans',sans-serif;">850</div>
<div style="left:522.4px;top:164.72px;width:18.1px;height:18.12px;background:#4a4a4a;"></div>
<div class="t" style="left:519.45px;top:173.82px;width:24px;text-align:center;height:8px;line-height:8px;font-size:6.2px;color:#e8e8e8;font-family:'Liberation Sans',sans-serif;">899</div>
<div style="left:541.3px;top:164.72px;width:18.1px;height:18.12px;background:#4a4a4a;"></div>
<div class="t" style="left:538.35px;top:173.82px;width:24px;text-align:center;height:8px;line-height:8px;font-size:6.2px;color:#e8e8e8;font-family:'Liberation Sans',sans-serif;">3628</div>
<div style="left:560.2px;top:164.72px;width:18.1px;height:18.12px;background:#4a4a4a;"></div>
<div class="t" style="left:557.25px;top:173.82px;width:24px;text-align:center;height:8px;line-height:8px;font-size:6.2px;color:#e8e8e8;font-family:'Liberation Sans',sans-serif;">118</div>
<div style="left:579.1px;top:164.72px;width:18.1px;height:18.12px;background:#4a4a4a;"></div>
<div class="t" style="left:576.15px;top:173.82px;width:24px;text-align:center;height:8px;line-height:8px;font-size:6.2px;color:#e8e8e8;font-family:'Liberation Sans',sans-serif;">141</div>
<div style="left:598.0px;top:164.72px;width:18.1px;height:18.12px;background:#4a4a4a;"></div>
<div class="t" style="left:595.05px;top:173.82px;width:24px;text-align:center;height:8px;line-height:8px;font-size:6.2px;color:#e8e8e8;font-family:'Liberation Sans',sans-serif;">50</div>
<div style="left:616.9px;top:164.72px;width:15.7px;height:18.12px;background:#4a4a4a;"></div>
<div style="left:503.5px;top:183.64px;width:18.1px;height:18.12px;background:#4a4a4a;"></div>
<div class="t" style="left:500.55px;top:192.74px;width:24px;text-align:center;height:8px;line-height:8px;font-size:6.2px;color:#e8e8e8;font-family:'Liberation Sans',sans-serif;">442</div>
<div style="left:522.4px;top:183.64px;width:18.1px;height:18.12px;background:#4a4a4a;"></div>
<div class="t" style="left:519.45px;top:192.74px;width:24px;text-align:center;height:8px;line-height:8px;font-size:6.2px;color:#e8e8e8;font-family:'Liberation Sans',sans-serif;">508</div>
<div style="left:541.3px;top:183.64px;width:18.1px;height:18.12px;background:#4a4a4a;"></div>
<div class="t" style="left:538.35px;top:192.74px;width:24px;text-align:center;height:8px;line-height:8px;font-size:6.2px;color:#e8e8e8;font-family:'Liberation Sans',sans-serif;">325</div>
<div style="left:560.2px;top:183.64px;width:18.1px;height:18.12px;background:#4a4a4a;"></div>
<div class="t" style="left:557.25px;top:192.74px;width:24px;text-align:center;height:8px;line-height:8px;font-size:6.2px;color:#e8e8e8;font-family:'Liberation Sans',sans-serif;">677</div>
<div style="left:579.1px;top:183.64px;width:18.1px;height:18.12px;background:#4a4a4a;"></div>
<div class="t" style="left:576.15px;top:192.74px;width:24px;text-align:center;height:8px;line-height:8px;font-size:6.2px;color:#e8e8e8;font-family:'Liberation Sans',sans-serif;">486</div>
<div style="left:598.0px;top:183.64px;width:18.1px;height:18.12px;background:#4a4a4a;"></div>
<div class="t" style="left:595.05px;top:192.74px;width:24px;text-align:center;height:8px;line-height:8px;font-size:6.2px;color:#e8e8e8;font-family:'Liberation Sans',sans-serif;">136</div>
<div style="left:616.9px;top:183.64px;width:15.7px;height:18.12px;background:#4a4a4a;"></div>
<div style="left:503.5px;top:202.56px;width:18.1px;height:18.12px;background:#4a4a4a;"></div>
<div class="t" style="left:500.55px;top:211.66px;width:24px;text-align:center;height:8px;line-height:8px;font-size:6.2px;color:#e8e8e8;font-family:'Liberation Sans',sans-serif;">249</div>
<div style="left:522.4px;top:202.56px;width:18.1px;height:18.12px;background:#4a4a4a;"></div>
<div class="t" style="left:519.45px;top:211.66px;width:24px;text-align:center;height:8px;line-height:8px;font-size:6.2px;color:#e8e8e8;font-family:'Liberation Sans',sans-serif;">338</div>
<div style="left:541.3px;top:202.56px;width:18.1px;height:18.12px;background:#4a4a4a;"></div>
<div class="t" style="left:538.35px;top:211.66px;width:24px;text-align:center;height:8px;line-height:8px;font-size:6.2px;color:#e8e8e8;font-family:'Liberation Sans',sans-serif;">842</div>
<div style="left:560.2px;top:202.56px;width:18.1px;height:18.12px;background:#4a4a4a;"></div>
<div class="t" style="left:557.25px;top:211.66px;width:24px;text-align:center;height:8px;line-height:8px;font-size:6.2px;color:#e8e8e8;font-family:'Liberation Sans',sans-serif;">171</div>
<div style="left:579.1px;top:202.56px;width:18.1px;height:18.12px;background:#4a4a4a;"></div>
<div class="t" style="left:576.15px;top:211.66px;width:24px;text-align:center;height:8px;line-height:8px;font-size:6.2px;color:#e8e8e8;font-family:'Liberation Sans',sans-serif;">248</div>
<div style="left:598.0px;top:202.56px;width:18.1px;height:18.12px;background:#4a4a4a;"></div>
<div class="t" style="left:595.05px;top:211.66px;width:24px;text-align:center;height:8px;line-height:8px;font-size:6.2px;color:#e8e8e8;font-family:'Liberation Sans',sans-serif;">338</div>
<div style="left:616.9px;top:202.56px;width:15.7px;height:18.12px;background:#4a4a4a;"></div>
<svg style="left:503.1px;top:145.4px;" width="19" height="12" viewBox="0 0 19 12"><path d="M8 3 l3 1.2 l-1.4 3 M11 4.2 l-3 2" fill="none" stroke="#a8a8a8" stroke-width="0.8"/></svg>
<svg style="left:578.7px;top:145.4px;" width="19" height="12" viewBox="0 0 19 12"><circle cx="9.5" cy="5.5" r="2.6" fill="#5a5a5a"/></svg>
<svg style="left:522.0px;top:164.32px;" width="19" height="12" viewBox="0 0 19 12"><path d="M8 5 l1 2 l1 -2" fill="none" stroke="#666" stroke-width="0.6"/></svg>
<svg style="left:540.9px;top:164.32px;" width="19" height="12" viewBox="0 0 19 12"><path d="M2 9.5 C3 4 4 4 4.5 8 C6 5 7 9 8.5 7 C10 5 11 9 13 7 C14.5 6 16 8 17.5 8.5" fill="none" stroke="#bcbcbc" stroke-width="0.8"/></svg>
<svg style="left:559.8px;top:164.32px;" width="19" height="12" viewBox="0 0 19 12"><path d="M3.5 3 C7 1 12 2.5 15 6 C15.5 9 10 11 6.5 10 C4 8.5 3 5.5 3.5 3 Z" fill="#a8a8a8"/><path d="M5 4 C8 3 11 4 13 6" stroke="#c8c8c8" stroke-width="1.2" fill="none"/></svg>
<svg style="left:578.7px;top:164.32px;" width="19" height="12" viewBox="0 0 19 12"><rect x="5.4" y="3.2" width="12" height="7" rx="1.2" fill="#4d4d4d" stroke="#f4f4f4" stroke-width="1.5"/><path d="M0.5 6.7 H5" stroke="#f4f4f4" stroke-width="1.2"/></svg>
<svg style="left:597.6px;top:164.32px;" width="19" height="12" viewBox="0 0 19 12"><path d="M9.5 2 L13.4 4.2 V8.8 L9.5 11 L5.6 8.8 V4.2 Z" fill="#b0b0b0"/></svg>
<svg style="left:503.1px;top:183.24px;" width="19" height="12" viewBox="0 0 19 12"><circle cx="9.2" cy="6.5" r="3" fill="none" stroke="#dcdcdc" stroke-width="1.4"/></svg>
<svg style="left:540.9px;top:183.24px;" width="19" height="12" viewBox="0 0 19 12"><path d="M9.5 2.5 V10.5 M5.5 6.5 H13.5 M6.7 3.7 L12.3 9.3 M12.3 3.7 L6.7 9.3" stroke="#8c8c8c" stroke-width="0.6"/></svg>
<svg style="left:559.8px;top:183.24px;" width="19" height="12" viewBox="0 0 19 12"><circle cx="2.5" cy="4" r="0.8" fill="#e0e0e0"/><circle cx="6" cy="6.5" r="0.7" fill="#e0e0e0"/><circle cx="9" cy="5" r="0.6" fill="#ccc"/><circle cx="12" cy="6" r="0.7" fill="#ddd"/><circle cx="17" cy="4" r="0.8" fill="#e0e0e0"/><circle cx="5" cy="9.5" r="0.6" fill="#ccc"/><circle cx="10" cy="9" r="0.5" fill="#bbb"/></svg>
<svg style="left:597.6px;top:183.24px;" width="19" height="12" viewBox="0 0 19 12"><path d="M7.2 11 L5.4 8 M9 10.5 L7 3.2 M10 10.5 L11 2 M11 10.8 L14.4 4.6 M12 11.2 L15 9" stroke="#f8f8f8" stroke-width="2.2" stroke-linecap="round"/></svg>
<svg style="left:503.1px;top:202.16px;" width="19" height="12" viewBox="0 0 19 12"><path d="M0.5 10.5 C3 8 4 8.5 5.5 6 C7 3.5 9 3 10.5 5.5 C12 7.5 13.5 7 15 8.5 C16.5 9.5 17.5 10 18.5 10.5" fill="none" stroke="#b0b0b0" stroke-width="0.8"/><path d="M1 11.5 H18" stroke="#8c8c8c" stroke-width="0.6" stroke-dasharray="1 1"/></svg>
<svg style="left:522.0px;top:202.16px;" width="19" height="12" viewBox="0 0 19 12"><defs><radialGradient id="g31" cx="50%" cy="70%" r="60%"><stop offset="0" stop-color="#ffffff"/><stop offset="0.5" stop-color="#c0c0c0"/><stop offset="1" stop-color="#4d4d4d"/></radialGradient></defs><ellipse cx="9.5" cy="7" rx="3.6" ry="5.6" fill="url(#g31)"/></svg>
<svg style="left:540.9px;top:202.16px;" width="19" height="12" viewBox="0 0 19 12"><circle cx="9.5" cy="5" r="1.6" fill="#606060"/></svg>
<svg style="left:559.8px;top:202.16px;" width="19" height="12" viewBox="0 0 19 12"><circle cx="9.5" cy="6" r="3" fill="#636363"/></svg>
<svg style="left:578.7px;top:202.16px;" width="19" height="12" viewBox="0 0 19 12"><path d="M2 2.5 C8 1 15 3.5 16.5 8 C13 11.5 6 10.5 3 7.5 C2 6 1.6 4 2 2.5 Z" fill="#8e8e8e"/><path d="M4 4 C8 3.5 12 5 14.5 8" stroke="#b0b0b0" stroke-width="1.4" fill="none"/></svg>
<svg style="left:597.6px;top:202.16px;" width="19" height="12" viewBox="0 0 19 12"><circle cx="9.5" cy="5" r="0.7" fill="#6a6a6a"/></svg>
<div style="left:596.9px;top:201.46px;width:20.099999999999998px;height:20.12px;border:1px solid #3f819b;box-sizing:border-box;"></div>
<svg style="left:635px;top:152px;" width="8" height="6" viewBox="0 0 8 6"><path d="M2 4.2 L4 2.2 L6 4.2" fill="none" stroke="#787878" stroke-width="0.9"/></svg>
<svg style="left:635px;top:212px;" width="8" height="6" viewBox="0 0 8 6"><path d="M2 1.8 L4 3.8 L6 1.8" fill="none" stroke="#8a8a8a" stroke-width="0.9"/></svg>
<div style="left:634.7px;top:195.2px;width:6.6px;height:6.2px;background:#6c6c6c;"></div>
<div class="t" style="left:502px;top:226.2px;height:12px;line-height:12px;font-size:7.05px;color:#dcdcdc;">大小</div>
<svg style="left:573px;top:227.5px;" width="9" height="9" viewBox="0 0 9 9"><path d="M2.4 5.2 A2.7 2.7 0 1 0 5 2.2" fill="none" stroke="#bcbcbc" stroke-width="1.2"/><path d="M1.6 1.8 V5.4 H5" fill="none" stroke="#bcbcbc" stroke-width="0.9"/></svg>
<div style="left:586px;top:226.6px;width:37.8px;height:10.4px;background:#434343;"></div>
<div class="t" style="left:588.2px;top:226.0px;height:12px;line-height:12px;font-size:6.45px;color:#ececec;">338 像素</div>
<div style="left:502px;top:242.2px;width:121.5px;height:2.2px;background:#7c7c7c;border-radius:1px;"></div>
<svg style="left:597.8px;top:244px;" width="8" height="7" viewBox="0 0 8 7"><path d="M4 0.4 L7.6 6.2 H0.4 Z" fill="#f8f8f8"/></svg>
<div style="left:502.8px;top:254.8px;width:6.2px;height:6.2px;background:#434343;border:0.8px solid #565656;box-sizing:border-box;border-radius:1px;"></div>
<div class="t" style="left:512.3px;top:251.8px;height:12px;line-height:12px;font-size:7.05px;color:#e4e4e4;">翻转 X</div>
<div style="left:540px;top:254.8px;width:6.2px;height:6.2px;background:#434343;border:0.8px solid #565656;box-sizing:border-box;border-radius:1px;"></div>
<div class="t" style="left:549.2px;top:251.8px;height:12px;line-height:12px;font-size:7.05px;color:#e4e4e4;">翻转 Y</div>
<div class="t" style="left:517.3px;top:269.8px;height:12px;line-height:12px;font-size:7.05px;color:#dcdcdc;">角度:</div>
<div style="left:538px;top:270.6px;width:33.4px;height:11px;background:#434343;"></div>
<div class="t" style="left:540px;top:270.0px;height:12px;line-height:12px;font-size:6.45px;color:#ececec;">0°</div>
<div class="t" style="left:517.3px;top:287.0px;height:12px;line-height:12px;font-size:7.05px;color:#dcdcdc;">圆度:</div>
<div style="left:538px;top:287.8px;width:33.4px;height:11px;background:#434343;"></div>
<div class="t" style="left:540px;top:287.2px;height:12px;line-height:12px;font-size:6.45px;color:#ececec;">100%</div>
<div style="left:583px;top:255px;width:44.6px;height:45.4px;background:#4f4f4f;border:0.8px solid #626262;box-sizing:border-box;"></div>
<svg style="left:583px;top:255px;" width="45" height="46" viewBox="0 0 45 46"><circle cx="22.2" cy="22.3" r="15.3" fill="none" stroke="#929292" stroke-width="0.9"/><path d="M7 22.3 H37.4 M22.2 7 V37.6" stroke="#7c7c7c" stroke-width="0.7"/><circle cx="22.2" cy="7" r="1.9" fill="#f8f8f8"/><circle cx="22.2" cy="37.6" r="1.9" fill="#f8f8f8"/><path d="M38.6 20 L42.6 22.3 L38.6 24.6 Z" fill="#f8f8f8"/></svg>
<div class="t" style="left:502px;top:303.2px;height:12px;line-height:12px;font-size:7.05px;color:#787878;">硬度</div>
<div style="left:591px;top:304.3px;width:33px;height:10px;background:#4c4c4c;"></div>
<div style="left:502px;top:318.6px;width:121.5px;height:2.1px;background:#727272;border-radius:1px;"></div>
<div style="left:501.09999999999997px;top:333.2px;width:7px;height:7px;background:#ececec;border-radius:1.3px;"></div>
<svg style="left:501.09999999999997px;top:333.2px;" width="7" height="7" viewBox="0 0 7 7"><path d="M1.5 3.5 L3 5.2 L5.6 1.8" fill="none" stroke="#1c1c1c" stroke-width="1.3"/></svg>
<div class="t" style="left:512.4px;top:330.9px;height:12px;line-height:12px;font-size:7.05px;color:#e4e4e4;">间距</div>
<div style="left:590.4px;top:331.8px;width:34px;height:10.2px;background:#3b424b;"></div>
<div class="t" style="left:592px;top:331.0px;height:12px;line-height:12px;font-size:6.45px;color:#f4f4f4;">1</div>
<div style="left:596.2px;top:333.4px;width:0.7px;height:7px;background:#e8e8e8;"></div>
<div class="t" style="left:597px;top:331.0px;height:12px;line-height:12px;font-size:6.45px;color:#f4f4f4;">%</div>
<div style="left:502px;top:345.9px;width:121.5px;height:2.1px;background:#808080;border-radius:1px;"></div>
<svg style="left:498.6px;top:348.4px;" width="8" height="7" viewBox="0 0 8 7"><path d="M4 0.4 L7.6 6.2 H0.4 Z" fill="#f8f8f8"/></svg>
<div style="left:495.3px;top:328.1px;width:144.3px;height:29.9px;border:2.5px solid #e42a1c;border-radius:1.5px;box-sizing:border-box;"></div>
<div style="left:440.4px;top:388px;width:194.6px;height:19px;background:#6c6c6c;"></div>
<svg style="left:440.4px;top:388px;" width="195" height="19" viewBox="0 0 195 19"><defs><linearGradient id="pg" x1="0" y1="0" x2="0" y2="1"><stop offset="0" stop-color="#8a8a8a"/><stop offset="0.28" stop-color="#ffffff"/><stop offset="0.6" stop-color="#e4e4e4"/><stop offset="1" stop-color="#c8c8c8"/></linearGradient></defs><path d="M8 19 C22 14 38 11.4 50 11.6 C60 11.8 70 15 80 19 Z" fill="url(#pg)"/></svg>
<div style="left:648.3px;top:36px;width:159px;height:371px;background:#535353;"></div>
<div style="left:648.3px;top:36px;width:159px;height:6.2px;background:#444444;"></div>
<svg style="left:663.5px;top:36.6px;" width="6" height="5" viewBox="0 0 6 5"><path d="M2.4 0.8 L0.9 2.4 L2.4 4 M4.8 0.8 L3.3 2.4 L4.8 4" fill="none" stroke="#c4c4c4" stroke-width="0.8"/></svg>
<div style="left:648.3px;top:42.2px;width:3px;height:365px;background:#4a4a4a;"></div>
<div style="left:672px;top:42.2px;width:1px;height:365px;background:#404040;"></div>
<div style="left:651.3px;top:86px;width:20.7px;height:1px;background:#464646;"></div>
<div style="left:651.3px;top:124.6px;width:20.7px;height:1px;background:#464646;"></div>
<div style="left:651.3px;top:148.8px;width:20.7px;height:1px;background:#464646;"></div>
<div style="left:651.3px;top:172px;width:20.7px;height:1px;background:#464646;"></div>
<div style="left:651.3px;top:213.8px;width:20.7px;height:1px;background:#464646;"></div>
<div style="left:651.3px;top:257.6px;width:20.7px;height:1px;background:#464646;"></div>
<div style="left:651.3px;top:281px;width:20.7px;height:1px;background:#464646;"></div>
<div style="left:651.3px;top:302.8px;width:20.7px;height:1px;background:#464646;"></div>
<svg style="left:653.5px;top:48.5px;" width="16" height="16" viewBox="0 0 16 16"><rect x="3.4" y="2.6" width="1.8" height="1.8" fill="#e6e6e6"/><rect x="3.4" y="6.2" width="1.8" height="1.8" fill="#e6e6e6"/><rect x="3.2" y="10" width="2.4" height="2.4" fill="#e6e6e6"/><path d="M7.6 3.4 C11.6 3 12.8 7 10.8 10 L9 12" fill="none" stroke="#e6e6e6" stroke-width="1.3"/><path d="M8 9.4 L8.6 12.6 L11.8 12" fill="none" stroke="#e6e6e6" stroke-width="1.1"/></svg>
<svg style="left:653.0px;top:66.4px;" width="16" height="16" viewBox="0 0 16 16"><path d="M4.4 3.6 L12.4 8 L4.4 12.4 Z" fill="#e6e6e6"/></svg>
<svg style="left:653.5px;top:90.0px;" width="16" height="16" viewBox="0 0 16 16"><path d="M3.4 4.8 L6.4 3.2 L9.4 4.8 V8.6 L6.4 10.2 L3.4 8.6 Z" fill="#8c8c8c" stroke="#e6e6e6" stroke-width="1.2"/><path d="M3.4 4.8 L6.4 6.4 L9.4 4.8 M6.4 6.4 V10" fill="none" stroke="#e6e6e6" stroke-width="0.9"/><rect x="11" y="3.6" width="1.8" height="1.8" fill="#e6e6e6"/><rect x="11" y="7" width="1.8" height="1.8" fill="#e6e6e6"/><rect x="3.2" y="11.4" width="9.8" height="2.2" fill="#e6e6e6"/></svg>
<svg style="left:653.5px;top:106.6px;" width="16" height="16" viewBox="0 0 16 16"><circle cx="8" cy="8" r="5.2" fill="none" stroke="#e6e6e6" stroke-width="1.2"/><rect x="7.4" y="7.2" width="1.3" height="3.8" fill="#e6e6e6"/><rect x="7.4" y="4.8" width="1.3" height="1.4" fill="#e6e6e6"/></svg>
<div style="left:653.4px;top:129.6px;width:17px;height:16px;background:#2e2e2e;border-radius:1.5px;"></div>
<svg style="left:654.0px;top:129.7px;" width="16" height="16" viewBox="0 0 16 16"><path d="M12.8 3.4 L8.6 8.6" stroke="#e6e6e6" stroke-width="2.1" stroke-linecap="round"/><path d="M7.6 9.8 L5.8 12" stroke="#e6e6e6" stroke-width="3.2" stroke-linecap="round"/><path d="M2.8 3.4 h1.4 M2.8 5.8 h1.4 M2.8 8.2 h1.4 M5.4 3.4 h1 M5.4 5.8 h1" stroke="#e6e6e6" stroke-width="1.1"/></svg>
<svg style="left:654.0px;top:152.8px;" width="16" height="16" viewBox="0 0 16 16"><path d="M2.6 3.4 h1.4 M2.6 5.8 h1.4 M2.6 8.2 h1.4 M5.2 3.4 h1" stroke="#e6e6e6" stroke-width="1.1"/><circle cx="10" cy="5.2" r="1.9" fill="#e6e6e6"/><rect x="9.1" y="6" width="1.8" height="3.6" fill="#e6e6e6"/><rect x="6.4" y="9.4" width="7.4" height="2" fill="#e6e6e6"/><rect x="6.4" y="12.4" width="7.4" height="1.2" fill="#e6e6e6"/></svg>
<div class="t" style="left:656.5px;top:181px;font-size:9.4px;line-height:13px;font-weight:bold;color:#e6e6e6;font-family:'Liberation Sans',sans-serif;">A</div>
<div style="left:664.2px;top:182.6px;width:0.9px;height:9.8px;background:#e6e6e6;"></div>
<svg style="left:652.8px;top:196.6px;" width="16" height="16" viewBox="0 0 16 16"><path d="M9.6 3.4 V12.4 M11.8 3.4 V12.4" stroke="#e6e6e6" stroke-width="1.2"/><path d="M12.6 3.4 H7.8 C4.2 3.4 4.2 8.6 7.8 8.6 H9.6 V3.4 Z" fill="#e6e6e6"/></svg>
<svg style="left:653.2px;top:220.0px;" width="16" height="16" viewBox="0 0 16 16"><rect x="4" y="3.8" width="8" height="8.6" fill="none" stroke="#e6e6e6" stroke-width="1.3"/><rect x="5.6" y="5.4" width="4.8" height="2.4" fill="#e6e6e6"/><path d="M4 10 H12" stroke="#e6e6e6" stroke-width="1.1"/></svg>
<svg style="left:653.2px;top:235.8px;" width="16" height="16" viewBox="0 0 16 16"><path d="M3.8 3.2 H12.2 V9.6 L9.2 12.8 H3.8 Z" fill="#e6e6e6"/><path d="M5.4 5.4 H10.6 M5.4 7.2 H10.6 M5.4 9 H8.4" stroke="#535353" stroke-width="0.8"/></svg>
<svg style="left:653.5px;top:260.6px;" width="16" height="16" viewBox="0 0 16 16"><path d="M4.6 4.6 L12.6 12.4 M11.4 4.6 L3.4 12.4" stroke="#e6e6e6" stroke-width="1.4" stroke-linecap="round"/><path d="M3 3.2 L5.6 5.6" stroke="#e6e6e6" stroke-width="2.8" stroke-linecap="round"/><path d="M13 3.2 L10.6 5.6" stroke="#e6e6e6" stroke-width="2.6" stroke-linecap="round"/></svg>
<svg style="left:653.0px;top:283.7px;" width="16" height="16" viewBox="0 0 16 16"><rect x="4" y="3.6" width="8" height="8.6" rx="1" fill="none" stroke="#e6e6e6" stroke-width="1.2"/><rect x="7.6" y="5.2" width="2.8" height="4.4" fill="#e6e6e6"/></svg>
<div style="left:673px;top:42.2px;width:134px;height:17.7px;background:#424242;"></div>
<div style="left:673px;top:42.8px;width:24.2px;height:17.1px;background:#535353;"></div>
<div class="t" style="left:678.5px;top:45.6px;height:12px;line-height:12px;font-size:7.05px;color:#f4f4f4;">颜色</div>
<div class="t" style="left:704px;top:45.6px;height:12px;line-height:12px;font-size:7.05px;color:#a4a4a4;">色板</div>
<div class="t" style="left:729.2px;top:45.6px;height:12px;line-height:12px;font-size:7.05px;color:#a4a4a4;">导航器</div>
<div style="left:685px;top:72.6px;width:10.8px;height:10.4px;background:#fbfbfb;outline:0.8px solid #535353;"></div>
<div style="left:679px;top:67px;width:10.4px;height:10.4px;background:#fbfbfb;outline:0.8px solid #535353;"></div>
<div style="left:699px;top:64px;width:86.4px;height:108px;background:linear-gradient(to bottom, rgba(0,0,0,0), #000), linear-gradient(to right, #fff, #f2005e);"></div>
<svg style="left:697.5px;top:62.5px;" width="6" height="6" viewBox="0 0 6 6"><circle cx="3" cy="3" r="1.9" fill="none" stroke="#f4f4f4" stroke-width="0.9"/></svg>
<svg style="left:790px;top:65.6px;" width="5" height="7" viewBox="0 0 5 7"><path d="M0.3 0.4 L4.4 3.2 L0.3 6 Z" fill="#f4f4f4"/></svg>
<div style="left:795.3px;top:64px;width:11.7px;height:108.6px;background:linear-gradient(to bottom,#f00 0%,#f0f 17%,#00f 33%,#0ff 50%,#0f0 67%,#ff0 83%,#f00 100%);"></div>
<div style="left:673px;top:183.4px;width:134px;height:2.2px;background:#3e3e3e;"></div>
<div style="left:673px;top:185.6px;width:134px;height:16px;background:#424242;"></div>
<div style="left:673px;top:186px;width:26px;height:15.6px;background:#535353;"></div>
<div class="t" style="left:678.8px;top:188.4px;height:12px;line-height:12px;font-size:7.05px;color:#f4f4f4;">画笔</div>
<div class="t" style="left:676.8px;top:206.4px;height:12px;line-height:12px;font-size:7.05px;color:#dcdcdc;">大小:</div>
<svg style="left:729px;top:208px;" width="9" height="9" viewBox="0 0 9 9"><path d="M2.4 5.2 A2.7 2.7 0 1 0 5 2.2" fill="none" stroke="#bcbcbc" stroke-width="1.2"/><path d="M1.6 1.8 V5.4 H5" fill="none" stroke="#bcbcbc" stroke-width="0.9"/></svg>
<div style="left:743px;top:207.4px;width:37.5px;height:10.2px;background:#434343;"></div>
<div class="t" style="left:745px;top:206.6px;height:12px;line-height:12px;font-size:6.45px;color:#ececec;">338 像素</div>
<svg style="left:789px;top:213.8px;" width="10" height="10" viewBox="0 0 10 10"><rect x="0" y="0" width="10" height="10" fill="#e8e8e8"/><path d="M8 1.6 L3.2 8.2" stroke="#2a2a2a" stroke-width="1.7"/><path d="M1.4 1.6 h2.4 M1.4 3.4 h1.6" stroke="#666" stroke-width="0.8"/></svg>
<div style="left:676.8px;top:223.3px;width:99px;height:2.1px;background:#7c7c7c;border-radius:1px;"></div>
<svg style="left:754.3px;top:224.4px;" width="8" height="7" viewBox="0 0 8 7"><path d="M4 0.4 L7.6 6.2 H0.4 Z" fill="#f8f8f8"/></svg>
<div style="left:673px;top:232.3px;width:134px;height:19.4px;background:#575757;"></div>
<div style="left:673.7px;top:232.9px;width:18.3px;height:18.2px;background:#4b4b4b;"></div>
<div class="t" style="left:673.8px;top:243.4px;width:18px;text-align:center;height:8px;line-height:8px;font-size:6.2px;color:#e0e0e0;font-family:'Liberation Sans',sans-serif;">2</div>
<div style="left:692.7px;top:232.9px;width:18.3px;height:18.2px;background:#4b4b4b;"></div>
<div style="left:711.7px;top:232.9px;width:18.3px;height:18.2px;background:#4b4b4b;"></div>
<div class="t" style="left:711.8px;top:243.4px;width:18px;text-align:center;height:8px;line-height:8px;font-size:6.2px;color:#e0e0e0;font-family:'Liberation Sans',sans-serif;">3</div>
<div style="left:730.7px;top:232.9px;width:18.3px;height:18.2px;background:#4b4b4b;"></div>
<div class="t" style="left:730.8px;top:243.4px;width:18px;text-align:center;height:8px;line-height:8px;font-size:6.2px;color:#e0e0e0;font-family:'Liberation Sans',sans-serif;">3</div>
<div style="left:749.7px;top:232.9px;width:18.3px;height:18.2px;background:#4b4b4b;"></div>
<div class="t" style="left:749.8px;top:243.4px;width:18px;text-align:center;height:8px;line-height:8px;font-size:6.2px;color:#e0e0e0;font-family:'Liberation Sans',sans-serif;">10</div>
<div style="left:768.7px;top:232.9px;width:18.3px;height:18.2px;background:#4b4b4b;"></div>
<div class="t" style="left:768.8px;top:243.4px;width:18px;text-align:center;height:8px;line-height:8px;font-size:6.2px;color:#e0e0e0;font-family:'Liberation Sans',sans-serif;">4</div>
<div style="left:787.7px;top:232.9px;width:18.3px;height:18.2px;background:#4b4b4b;"></div>
<div class="t" style="left:787.8px;top:243.4px;width:18px;text-align:center;height:8px;line-height:8px;font-size:6.2px;color:#e0e0e0;font-family:'Liberation Sans',sans-serif;">3</div>
<svg style="left:673px;top:232.3px;" width="134" height="19" viewBox="0 0 134 19"><circle cx="9.8" cy="6.4" r="0.6" fill="#aaa"/><circle cx="28.6" cy="9.9" r="1.3" fill="#f4f4f4"/><circle cx="47.8" cy="6.4" r="0.8" fill="#e0e0e0"/><circle cx="66.8" cy="6.4" r="0.5" fill="#999"/><circle cx="85.6" cy="6.4" r="1.4" fill="#f4f4f4"/><circle cx="104.6" cy="6.4" r="0.6" fill="#bbb"/><circle cx="123.8" cy="6.4" r="0.5" fill="#999"/></svg>
<div style="left:673px;top:251.7px;width:134px;height:54.4px;background:#494949;"></div>
<div style="left:673px;top:251.7px;width:71px;height:54.4px;background:#525252;"></div>
<div style="left:673px;top:281.3px;width:71px;height:0.9px;background:#464646;"></div>
<svg style="left:673px;top:251.7px;" width="71" height="5" viewBox="0 0 71 5"><path d="M5 2 c2 -1 3 1 5 0 c1.5 -0.8 3 0.6 5 0 M18 2 c1 -0.6 2 0.6 3 0" fill="none" stroke="#d0d0d0" stroke-width="0.9"/></svg>
<svg style="left:673px;top:258px;" width="72" height="16" viewBox="0 0 72 16"><path d="M4.2 6.2 C12 4.4 22 5 34 7.8 C46 10.6 56 9.8 67.4 6.8" fill="none" stroke="#fcfcfc" stroke-width="6.6" stroke-linecap="round"/></svg>
<div class="t" style="left:678.1px;top:270.3px;height:12px;line-height:12px;font-size:7.05px;color:#ececec;">样本画笔 1943</div>
<svg style="left:673px;top:282.3px;" width="72" height="16" viewBox="0 0 72 16"><path d="M4.2 6.2 C12 4.4 22 5 34 7.8 C46 10.6 56 9.8 67.4 6.8" fill="none" stroke="#fcfcfc" stroke-width="6.6" stroke-linecap="round"/></svg>
<div class="t" style="left:678.1px;top:294.1px;height:12px;line-height:12px;font-size:7.05px;color:#ececec;">样本画笔 1944</div>
<div style="left:673px;top:306px;width:134px;height:16.6px;background:#484848;"></div>
<svg style="left:677px;top:311px;" width="5" height="8" viewBox="0 0 5 8"><path d="M1.2 1 L3.4 3.8 L1.2 6.6" fill="none" stroke="#d0d0d0" stroke-width="0.9"/></svg>
<svg style="left:684.5px;top:310.4px;" width="9" height="8" viewBox="0 0 9 8"><path d="M0.3 0.6 H3.6 L4.4 1.6 H8.6 V7.2 H0.3 Z" fill="#ececec"/></svg>
<div class="t" style="left:699px;top:308.8px;height:12px;line-height:12px;font-size:7.05px;color:#ececec;">自定义图案</div>
<div style="left:673px;top:322.6px;width:134px;height:24.4px;background:#4f4f4f;"></div>
<div style="left:672.4px;top:322.6px;width:72.6px;height:24.3px;background:#4d4f50;border:0.9px solid #a2683e;box-sizing:border-box;"></div>
<svg style="left:674px;top:324.6px;" width="70" height="12" viewBox="0 0 70 12"><path d="M4 5 C14 2.6 24 6.6 36 6.2 C46 5.8 56 3.2 66 6.4" fill="none" stroke="#7c8589" stroke-width="1.3"/><path d="M4 6.6 C16 5 26 8.8 38 8 C48 7.4 58 5.6 66 8" fill="none" stroke="#6a7276" stroke-width="0.8"/></svg>
<div class="t" style="left:677.5px;top:334.0px;height:12px;line-height:12px;font-size:7.05px;color:#ececec;">飘带</div>
<div style="left:677.5px;top:351.1px;width:47.5px;height:2px;background:#7c7c7c;border-radius:1px;"></div>
<svg style="left:678.2px;top:353.4px;" width="8" height="7" viewBox="0 0 8 7"><path d="M4 0.4 L7.6 6.2 H0.4 Z" fill="#f8f8f8"/></svg>
<svg style="left:738.6px;top:350.4px;" width="13" height="10" viewBox="0 0 13 10"><ellipse cx="4.2" cy="4.6" rx="3.2" ry="2.1" fill="none" stroke="#dcdcdc" stroke-width="0.9"/><circle cx="4.2" cy="4.6" r="0.8" fill="#dcdcdc"/><path d="M8 8.2 L11.6 2.4" stroke="#dcdcdc" stroke-width="1.3"/></svg>
<svg style="left:757px;top:351.6px;" width="9" height="8" viewBox="0 0 9 8"><path d="M0.4 0.6 H3.6 L4.4 1.6 H8.4 V7 H0.4 Z" fill="#ececec"/></svg>
<svg style="left:774.6px;top:351px;" width="9" height="9" viewBox="0 0 9 9"><path d="M3.6 1.2 H7.4 V7.4 H1.6 V3.2 Z" fill="none" stroke="#ececec" stroke-width="1.3"/><path d="M1 3.8 V0.8 H4 V3.8 Z" fill="#ececec"/></svg>
<svg style="left:791.8px;top:350.6px;" width="8" height="10" viewBox="0 0 8 10"><rect x="1.3" y="2.6" width="5.4" height="6" rx="0.8" fill="#e8e8e8"/><path d="M0.5 2.2 H7.5 M2.8 0.9 H5.2" stroke="#ececec" stroke-width="1"/><path d="M3 4 V7.4 M5 4 V7.4" stroke="#535353" stroke-width="0.8"/></svg>
<div style="left:673px;top:362px;width:134px;height:2.2px;background:#3e3e3e;"></div>
<div style="left:673px;top:364.2px;width:134px;height:15px;background:#424242;"></div>
<div style="left:673px;top:364.6px;width:26.4px;height:14.6px;background:#535353;"></div>
<div class="t" style="left:678px;top:366.2px;height:12px;line-height:12px;font-size:7.05px;color:#f4f4f4;">图层</div>
<div class="t" style="left:704.4px;top:366.2px;height:12px;line-height:12px;font-size:7.05px;color:#a4a4a4;">通道</div>
<div class="t" style="left:730px;top:366.2px;height:12px;line-height:12px;font-size:7.05px;color:#a4a4a4;">路径</div>
<div style="left:677.6px;top:386.2px;width:46.8px;height:10.4px;background:#474747;border-radius:1.5px;"></div>
<svg style="left:679px;top:387.4px;" width="8" height="8" viewBox="0 0 8 8"><circle cx="3.2" cy="3.2" r="2.2" fill="none" stroke="#e4e4e4" stroke-width="1"/><path d="M4.8 4.8 L7 7.2" stroke="#e4e4e4" stroke-width="1.1"/></svg>
<div class="t" style="left:686.8px;top:385.6px;height:12px;line-height:12px;font-size:7.05px;color:#ececec;">类型</div>
<svg style="left:717px;top:388px;" width="8" height="8" viewBox="0 0 8 8"><path d="M2.6 3.2 L4 4.6 L5.4 3.2" fill="none" stroke="#999999" stroke-width="0.9"/></svg>
<svg style="left:735px;top:387.4px;" width="9" height="8" viewBox="0 0 9 8"><rect x="0.6" y="0.8" width="7.4" height="6.2" fill="none" stroke="#e4e4e4" stroke-width="1"/><path d="M1.6 6 L3.4 3.8 L4.6 5 L6 4 L7.2 6 Z" fill="#e4e4e4"/></svg>
<svg style="left:749px;top:387.2px;" width="8" height="8" viewBox="0 0 8 8"><circle cx="3.6" cy="3.8" r="3.3" fill="#e4e4e4"/><path d="M3.9 3.5 L3.9 1.2 A2.5 2.5 0 0 1 6.3 3.5 Z" fill="#535353"/></svg>
<div class="t" style="left:763.6px;top:385.4px;font-size:9.6px;line-height:12px;color:#ececec;font-family:'Liberation Serif',serif;font-weight:bold;">T</div>
<svg style="left:777.4px;top:387.2px;" width="9" height="9" viewBox="0 0 9 9"><rect x="1.8" y="1.8" width="5.2" height="5" fill="none" stroke="#e4e4e4" stroke-width="0.9"/><rect x="0.5" y="0.5" width="2.1" height="2.1" fill="#e4e4e4"/><rect x="6.2" y="0.5" width="2.1" height="2.1" fill="#e4e4e4"/><rect x="0.5" y="6" width="2.1" height="2.1" fill="#e4e4e4"/><rect x="6.2" y="6" width="2.1" height="2.1" fill="#e4e4e4"/></svg>
<svg style="left:791.6px;top:387px;" width="8" height="9" viewBox="0 0 8 9"><path d="M1 0.8 H4.6 L6.8 3 V8 H1 Z" fill="#e4e4e4"/><rect x="2.6" y="4.2" width="3" height="2.6" fill="#535353"/></svg>
<div style="left:677.6px;top:400.4px;width:67px;height:7px;background:#474747;"></div>
<div style="left:751.5px;top:400.4px;width:56px;height:7px;background:#474747;"></div>
<div class="t" style="left:681px;top:400.0px;height:12px;line-height:12px;font-size:7.05px;color:#b0b0b0;">正常</div>
<div class="t" style="left:754px;top:400.0px;height:12px;line-height:12px;font-size:7.05px;color:#8c8c8c;">不透明度:</div>
</div>
</body></html>
